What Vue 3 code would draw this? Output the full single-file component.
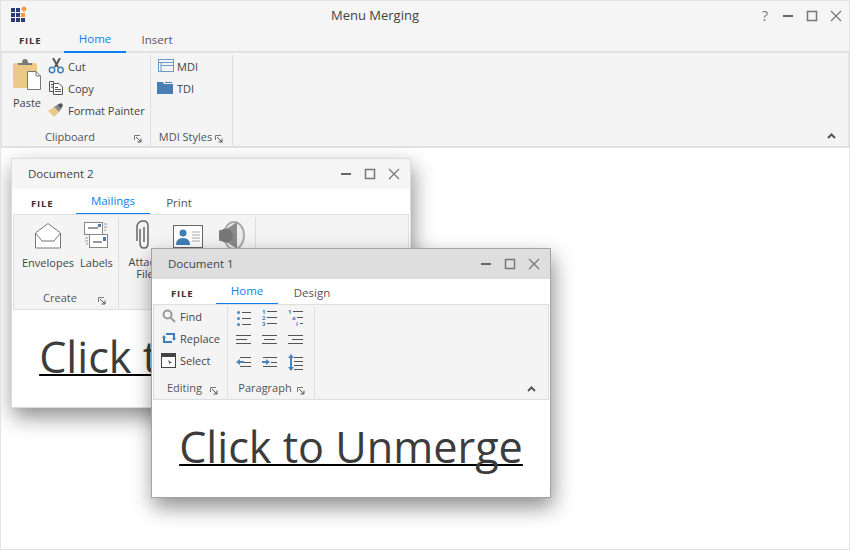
<template>
  <div class="shell">
    <div class="titlebar main-title">
      <svg class="logo" width="20" height="20" viewBox="0 0 20 20">
        <rect v-for="c in logoCells" :key="c.x + '-' + c.y" :x="c.x" :y="c.y" width="4" height="4" :fill="c.fill" />
        <path d="M13 1 L16 4 L13 7 L10 4 Z" fill="#f29a3c" />
      </svg>
      <span class="main-heading">Menu Merging</span>
      <div class="controls main-controls">
        <span class="help">?</span>
        <svg width="12" height="12" viewBox="0 0 12 12"><rect x="1" y="5" width="10" height="2" fill="#666" /></svg>
        <svg width="12" height="12" viewBox="0 0 12 12"><rect x="1.500" y="1.500" width="9" height="9" fill="none" stroke="#777" stroke-width="1.500" /></svg>
        <svg width="12" height="12" viewBox="0 0 12 12"><path d="M1 1 L11 11 M11 1 L1 11" stroke="#777" stroke-width="1.200" /></svg>
      </div>
    </div>
    <div class="tabs main-tabs">
      <span class="file">FILE</span>
      <span class="tab active">Home</span>
      <span class="tab">Insert</span>
    </div>
    <div class="ribbon main-ribbon">
      <div class="group" style="width: 149px">
        <div class="group-body clip-body">
          <div class="big-btn paste">
            <svg width="30" height="31" viewBox="0 0 30 31">
              <rect x="1" y="4" width="24" height="25" rx="2" fill="#edc987" />
              <path d="M6 6 V4 H10 Q10 0 13 0 Q16 0 16 4 H20 V6 Z" fill="#7a7a7a" />
              <path d="M15.500 12.500 H24 L28.500 17 V30.500 H15.500 Z" fill="#fff" stroke="#777" />
              <path d="M24 12.500 V17 H28.500" fill="none" stroke="#777" />
            </svg>
            <span>Paste</span>
          </div>
          <div class="small-col">
            <div class="small-btn">
              <svg width="16" height="16" viewBox="0 0 16 16">
                <path d="M5 0 L10 9 M12 0 L7 9" stroke="#555" stroke-width="2" fill="none" />
                <circle cx="4" cy="12" r="2.700" fill="none" stroke="#3f7fb8" stroke-width="1.500" />
                <circle cx="12.500" cy="12" r="2.700" fill="none" stroke="#3f7fb8" stroke-width="1.500" />
              </svg>
              <span>Cut</span>
            </div>
            <div class="small-btn">
              <svg width="16" height="16" viewBox="0 0 16 16" fill="none" stroke="#555">
                <path d="M5.500 3.500 V1.500 H1.500 V11.500 H5.500" />
                <path d="M5.500 3.500 H11 L14.500 7 V14.500 H5.500 Z" fill="#fff" />
                <path d="M3 4.500 H5 M3 7 H5 M7 7.500 H10 M7 9.500 H13 M7 11.500 H13" />
              </svg>
              <span>Copy</span>
            </div>
            <div class="small-btn">
              <svg width="16" height="16" viewBox="0 0 16 16">
                <path d="M0 9 L6 5 L11 10 L6 15 Q3 12 0 9 Z" fill="#edc987" />
                <path d="M6 5 L9 3 L13 7 L11 10 Z" fill="#8a8a8a" />
                <path d="M9 3 L13 1 L15 3 L13 7 Z" fill="#555" />
              </svg>
              <span>Format Painter</span>
            </div>
          </div>
        </div>
        <div class="group-label"><span>Clipboard</span><svg class="launcher launch-a" width="8" height="8" viewBox="0 0 8 8"><path d="M0.500 5 V0.500 H6" fill="none" stroke="#777" /><path d="M2 2 L7 7 V3.500 M7 7 H3.500" fill="none" stroke="#555" /></svg></div>
      </div>
      <div class="group" style="width: 82px">
        <div class="group-body mdi-body">
          <div class="small-btn">
            <svg class="mdi-icon" width="17" height="14" viewBox="0 0 17 14" fill="none" stroke="#6d9bc3">
              <rect x="1.500" y="0.500" width="15" height="12" />
              <path d="M2 3.500 H16 M4 6.500 H16" />
              <path d="M4 3.500 V12.500" />
            </svg>
            <span>MDI</span>
          </div>
          <div class="small-btn">
            <svg class="mdi-icon" width="17" height="14" viewBox="0 0 17 14">
              <path d="M0 1 H6 L7 3 H16 V13 H0 Z" fill="#4a7db5" />
              <rect x="8" y="1" width="7" height="1" fill="#4a7db5" />
            </svg>
            <span>TDI</span>
          </div>
        </div>
        <div class="group-label"><span>MDI Styles</span><svg class="launcher launch-b" width="8" height="8" viewBox="0 0 8 8"><path d="M0.500 5 V0.500 H6" fill="none" stroke="#777" /><path d="M2 2 L7 7 V3.500 M7 7 H3.500" fill="none" stroke="#555" /></svg></div>
      </div>
      <svg class="collapse" width="9" height="6" viewBox="0 0 9 6"><path d="M1 5 L4.500 1.500 L8 5" fill="none" stroke="#555" stroke-width="2" /></svg>
    </div>

    <div class="window doc2">
      <div class="titlebar doc-title">
        <span>Document 2</span>
        <div class="controls">
          <svg width="12" height="12" viewBox="0 0 12 12"><rect x="1" y="5" width="10" height="2" fill="#666" /></svg>
          <svg width="12" height="12" viewBox="0 0 12 12"><rect x="1.500" y="1.500" width="9" height="9" fill="none" stroke="#777" stroke-width="1.500" /></svg>
          <svg width="12" height="12" viewBox="0 0 12 12"><path d="M1 1 L11 11 M11 1 L1 11" stroke="#777" stroke-width="1.200" /></svg>
        </div>
      </div>
      <div class="tabs doc-tabs">
        <span class="file">FILE</span>
        <span class="tab active mailings">Mailings</span>
        <span class="tab print">Print</span>
      </div>
      <div class="ribbon doc-ribbon">
        <div class="group" style="width: 105px">
          <div class="group-body create-body">
            <div class="big-btn">
              <svg width="28" height="27" viewBox="0 0 28 27" fill="none" stroke="#777">
                <path d="M1.500 11 L14 1.500 L26.500 11 V26 H1.500 Z" fill="#fff" />
                <path d="M1.500 11 L8 19 H20 L26.500 11" />
              </svg>
              <span>Envelopes</span>
            </div>
            <div class="big-btn">
              <svg width="24" height="27" viewBox="0 0 24 27">
                <rect x="0.500" y="0.500" width="18" height="12" fill="#fff" stroke="#888" />
                <rect x="4" y="5" width="10" height="2" fill="#999" />
                <rect x="14" y="2" width="3" height="3" fill="#4a7db5" />
                <path d="M20 2 H23 M20 5 H23 M20 8 H22 M1 16 H4 M1 19 H4 M2 22 H4" stroke="#999" />
                <rect x="5.500" y="12.500" width="18" height="13" fill="#fff" stroke="#888" />
                <rect x="9" y="19" width="9" height="2" fill="#999" />
                <rect x="19" y="15" width="3" height="4" fill="#4a7db5" />
              </svg>
              <span>Labels</span>
            </div>
          </div>
          <div class="group-label"><span>Create</span><svg class="launcher launch-c" width="8" height="8" viewBox="0 0 8 8"><path d="M0.500 5 V0.500 H6" fill="none" stroke="#777" /><path d="M2 2 L7 7 V3.500 M7 7 H3.500" fill="none" stroke="#555" /></svg></div>
        </div>
        <div class="group" style="width: 137px">
          <div class="group-body merge-body">
            <div class="big-btn attach">
              <svg width="18" height="30" viewBox="0 0 18 30" fill="none" stroke="#666" stroke-width="1.500">
                <path d="M5 9 V23 Q5 28 9 28 Q13 28 13 23 V6 Q13 1 8.500 1 Q3 1 2 6 V21" />
                <path d="M9 7 V22" />
              </svg>
              <span>Attach<br />File</span>
            </div>
            <svg class="card" width="30" height="23" viewBox="0 0 30 23">
              <rect x="0.500" y="0.500" width="29" height="22" fill="#fff" stroke="#666" />
              <circle cx="10" cy="8" r="3.500" fill="#3f7fb8" />
              <path d="M3 20 Q3 13 10 13 Q17 13 17 20 Z" fill="#3f7fb8" />
              <path d="M19 7 H27 M19 10 H27 M19 13 H27 M19 16 H27" stroke="#aaa" />
            </svg>
            <svg class="speaker" width="27" height="29" viewBox="0 0 27 29">
              <ellipse cx="15" cy="14.500" rx="10" ry="13.500" fill="#ededed" stroke="#aaa" stroke-width="2" />
              <path d="M0 9 H6 L18 1 V28 L6 20 H0 Z" fill="#8b8b8b" />
              <ellipse cx="7" cy="14.500" rx="7" ry="7" fill="#777" />
            </svg>
          </div>
        </div>
      </div>
      <div class="doc-content"><a class="doc-link">Click to Unmerge</a></div>
    </div>

    <div class="window doc1">
      <div class="titlebar doc-title">
        <span>Document 1</span>
        <div class="controls">
          <svg width="12" height="12" viewBox="0 0 12 12"><rect x="1" y="5" width="10" height="2" fill="#666" /></svg>
          <svg width="12" height="12" viewBox="0 0 12 12"><rect x="1.500" y="1.500" width="9" height="9" fill="none" stroke="#777" stroke-width="1.500" /></svg>
          <svg width="12" height="12" viewBox="0 0 12 12"><path d="M1 1 L11 11 M11 1 L1 11" stroke="#777" stroke-width="1.200" /></svg>
        </div>
      </div>
      <div class="tabs doc-tabs">
        <span class="file">FILE</span>
        <span class="tab active">Home</span>
        <span class="tab design">Design</span>
      </div>
      <div class="ribbon doc-ribbon">
        <div class="group" style="width: 74px">
          <div class="group-body edit-body">
            <div class="small-btn">
              <svg width="14" height="14" viewBox="0 0 14 14" fill="none" stroke="#999" stroke-width="2">
                <circle cx="5.500" cy="5.500" r="4" />
                <path d="M8.500 8.500 L13 13" />
              </svg>
              <span>Find</span>
            </div>
            <div class="small-btn">
              <svg width="14" height="14" viewBox="0 0 14 14" fill="none" stroke="#3f7fb8" stroke-width="2">
                <path d="M2 5 V11 H10 M12 9 V3 H4" />
                <path d="M0 7 H4 L2 4 Z M10 7 H14 L12 10 Z" fill="#3f7fb8" stroke="none" />
              </svg>
              <span>Replace</span>
            </div>
            <div class="small-btn">
              <svg class="select-icon" width="15" height="15" viewBox="0 0 15 15">
                <rect x="0.500" y="0.500" width="14" height="14" fill="#fff" stroke="#444" />
                <rect x="1" y="1" width="13" height="3" fill="#444" />
                <path d="M7 7 L11 10 L9 10 L9 12 Z" fill="#444" />
              </svg>
              <span>Select</span>
            </div>
          </div>
          <div class="group-label"><span>Editing</span><svg class="launcher launch-d" width="8" height="8" viewBox="0 0 8 8"><path d="M0.500 5 V0.500 H6" fill="none" stroke="#777" /><path d="M2 2 L7 7 V3.500 M7 7 H3.500" fill="none" stroke="#555" /></svg></div>
        </div>
        <div class="group" style="width: 87px">
          <div class="group-body para-body">
            <svg v-for="(icon, i) in paraIcons" :key="i" width="16" height="20" viewBox="0 -4 16 20">
              <path :d="icon.gray" fill="none" stroke="#555" />
              <path :d="icon.blue" fill="#4a85bd" />
              <text v-for="d in icon.digits" :key="d.t + d.y" class="digit" :x="d.x" :y="d.y">{{ d.t }}</text>
            </svg>
          </div>
          <div class="group-label"><span>Paragraph</span><svg class="launcher launch-e" width="8" height="8" viewBox="0 0 8 8"><path d="M0.500 5 V0.500 H6" fill="none" stroke="#777" /><path d="M2 2 L7 7 V3.500 M7 7 H3.500" fill="none" stroke="#555" /></svg></div>
        </div>
        <svg class="collapse" width="9" height="6" viewBox="0 0 9 6"><path d="M1 5 L4.500 1.500 L8 5" fill="none" stroke="#555" stroke-width="2" /></svg>
      </div>
      <div class="doc-content"><a class="doc-link">Click to Unmerge</a></div>
    </div>
  </div>
</template>

<script setup>
const logoCells = []
for (let r = 0; r < 3; r++) {
  for (let c = 0; c < 3; c++) {
    // top right cell is replaced by the diamond
    if (r === 0 && c === 2) continue
    logoCells.push({
      x: c * 5,
      y: r * 5 + 3,
      fill: r === 1 && c === 2 ? '#f29a3c' : '#2b3a7a',
    })
  }
}

const dot = (y) => `M1 ${y} a1.500 1.500 0 1 0 3 0 a1.500 1.500 0 1 0 -3 0 Z `

const paraIcons = [
  { gray: 'M6 1.500 H15 M6 7.500 H15 M6 13.500 H15', blue: dot(1.5) + dot(7.5) + dot(13.5) },
  { gray: 'M5 0.500 H15 M5 6.500 H15 M5 12.500 H15', blue: '', digits: [{ t: '1', x: 0, y: 3 }, { t: '2', x: 0, y: 9 }, { t: '3', x: 0, y: 15 }] },
  { gray: 'M5 0.500 H15 M9 6.500 H15 M12 12.500 H15', blue: '', digits: [{ t: '1', x: 0, y: 3 }, { t: 'a', x: 4, y: 9 }, { t: 'i', x: 8, y: 15 }] },
  { gray: 'M0 2.500 H15 M0 6.500 H11 M0 10.500 H15', blue: '' },
  { gray: 'M0 2.500 H15 M2 6.500 H13 M0 10.500 H15', blue: '' },
  { gray: 'M0 2.500 H15 M4 6.500 H15 M0 10.500 H15', blue: '' },
  { gray: 'M4 2.500 H15 M8 7.500 H15 M4 11.500 H15', blue: 'M0 7 L4 4 V6 H8 V8 H4 V10 Z' },
  { gray: 'M1 2.500 H15 M9 7.500 H15 M1 11.500 H15', blue: 'M8 7 L4 4 V6 H0 V8 H4 V10 Z' },
  { gray: 'M6 2.500 H15 M6 6.500 H15 M6 10.500 H15 M6 14.500 H15', blue: 'M3 -1 L0 3 H2 V12 H0 L3 16 L6 12 H4 V3 H6 Z' },
]
</script>

<style>
html,
body {
  margin: 0;
  overflow: hidden;
}
</style>

<style scoped>
.shell {
  position: relative;
  width: 850px;
  height: 550px;
  box-sizing: border-box;
  border: 1px solid #e3e3e3;
  background: #fff;
  font-family: "Open Sans", "Liberation Sans", sans-serif;
  font-size: 11px;
  color: #444;
  overflow: hidden;
}

.titlebar {
  display: flex;
  align-items: center;
}

.main-title {
  position: relative;
  height: 26px;
  background: #f5f5f5;
  justify-content: center;
  padding-right: 100px;
  padding-top: 1px;
  box-sizing: border-box;
  font-size: 13px;
}

.logo {
  position: absolute;
  left: 10px;
  top: 4px;
}

.controls {
  margin-left: auto;
  display: flex;
  align-items: center;
  gap: 12px;
}

.main-controls {
  position: absolute;
  right: 7px;
  top: 9px;
}

.help {
  font-size: 14px;
  line-height: 12px;
  color: #777;
  margin-right: 2px;
}

.tabs {
  display: flex;
  align-items: flex-end;
  background: #f5f5f5;
}

.main-tabs {
  height: 24px;
  border-bottom: 2px solid #e2e2e2;
}

.doc-tabs {
  height: 25px;
  background: #fff;
}

.file {
  width: 63px;
  padding-left: 18px;
  box-sizing: border-box;
  font-size: 9.5px;
  font-weight: 700;
  letter-spacing: 0.8px;
  color: #333;
  line-height: 20px;
}

.doc-tabs .file {
  width: 64px;
  padding-left: 19px;
  line-height: 20px;
}

.tab {
  width: 62px;
  text-align: center;
  line-height: 22px;
  font-size: 11.5px;
  color: #555;
}

.tab.active {
  color: #0d7ff0;
  height: 23px;
  line-height: 18px;
  box-sizing: border-box;
  border-bottom: 2px solid #0d7ff0;
  margin-bottom: -2px;
}

.doc-tabs .tab.active {
  margin-bottom: -1px;
}

.tab.active.mailings {
  width: 74px;
}

.tab.print {
  width: 58px;
}

.tab.design {
  width: 68px;
}

.ribbon {
  position: relative;
  display: flex;
  background: #f4f4f4;
}

.main-ribbon {
  height: 93px;
  border: 1px solid #e2e2e2;
  border-width: 0 1px 2px;
}

.doc-ribbon {
  height: 94px;
  margin: 0 1px;
  border: 1px solid #dedede;
}

.group {
  position: relative;
  display: flex;
  flex-direction: column;
  height: 90px;
  margin-top: 2px;
  border-right: 1px solid #dedede;
  box-sizing: border-box;
  flex: none;
}

.doc-ribbon .group {
  height: 91px;
}

.group-body {
  flex: 1;
  display: flex;
  min-height: 0;
}

.group-label {
  height: 22px;
  display: flex;
  align-items: center;
  justify-content: center;
  color: #555;
  padding-right: 12px;
  box-sizing: border-box;
}

.main-ribbon .group-label {
  padding-top: 4px;
}

.launcher {
  position: absolute;
  bottom: 3px;
}

.main-ribbon .launcher {
  bottom: 2px;
}

.launch-a {
  right: 8px;
}

.launch-b {
  right: 9px;
}

.launch-c {
  right: 12px;
}

.launch-d {
  right: 9px;
}

.launch-e {
  right: 9px;
}

.clip-body {
  padding-left: 10px;
}

.big-btn {
  display: flex;
  flex-direction: column;
  align-items: center;
  text-align: center;
  line-height: 12px;
}

.big-btn span {
  margin-top: 8px;
}

.paste {
  width: 30px;
  flex: none;
  padding-top: 4px;
}

.paste span {
  margin-top: 7px;
}

.small-col {
  display: flex;
  flex-direction: column;
  margin-left: 6px;
}

.small-btn {
  display: flex;
  align-items: center;
  gap: 4px;
  height: 22px;
}

.mdi-body {
  flex-direction: column;
  padding-left: 6px;
}

.mdi-icon {
  margin-right: -1px;
}

.create-body {
  padding: 5px 0 0 8px;
  gap: 6px;
}

.merge-body {
  position: relative;
  padding: 3px 0 0 9px;
}

.attach {
  width: 34px;
  white-space: nowrap;
}

.attach svg {
  margin-right: 2px;
}

.attach span {
  margin-top: 6px;
}

.card {
  position: absolute;
  left: 54px;
  top: 8px;
}

.speaker {
  position: absolute;
  left: 100px;
  top: 4px;
}

.edit-body {
  flex-direction: column;
  margin-top: -2px;
  padding-left: 8px;
}

.select-icon {
  margin-left: -1px;
}

.para-body {
  display: grid;
  grid-template-columns: repeat(3, 16px);
  column-gap: 10px;
  row-gap: 2px;
  padding: 0 0 0 8px;
  align-content: start;
}

.digit {
  font-size: 6px;
  font-weight: 700;
  fill: #3f7fb8;
}

.collapse {
  position: absolute;
  right: 12px;
  bottom: 7px;
}

.window {
  position: absolute;
  width: 400px;
  height: 250px;
  box-sizing: border-box;
  background: #fff;
  display: flex;
  flex-direction: column;
  box-shadow: 2px 9px 20px rgba(0, 0, 0, 0.45);
}

.doc1 {
  left: 150px;
  top: 247px;
  border: 1px solid #a3a3a3;
}

.doc2 {
  left: 10px;
  top: 157px;
  border: 1px solid #dcdcdc;
}

.doc-title {
  height: 30px;
  flex: none;
  padding: 0 10px 2px 16px;
  box-sizing: border-box;
  font-size: 11.5px;
}

.doc-title .controls {
  margin-top: 2px;
}

.doc2 .doc-title {
  background: #f5f5f5;
}

.doc1 .doc-title {
  background: #dedede;
}

.doc-content {
  flex: 1;
  display: flex;
  justify-content: center;
  padding-top: 15px;
  overflow: hidden;
}

.doc-link {
  font-size: 43.2px;
  line-height: 64px;
  color: #3c3c3c;
  text-decoration: underline;
  text-decoration-color: #000;
  text-decoration-thickness: 2px;
  text-decoration-skip-ink: none;
  white-space: nowrap;
  height: 64px;
}
</style>
